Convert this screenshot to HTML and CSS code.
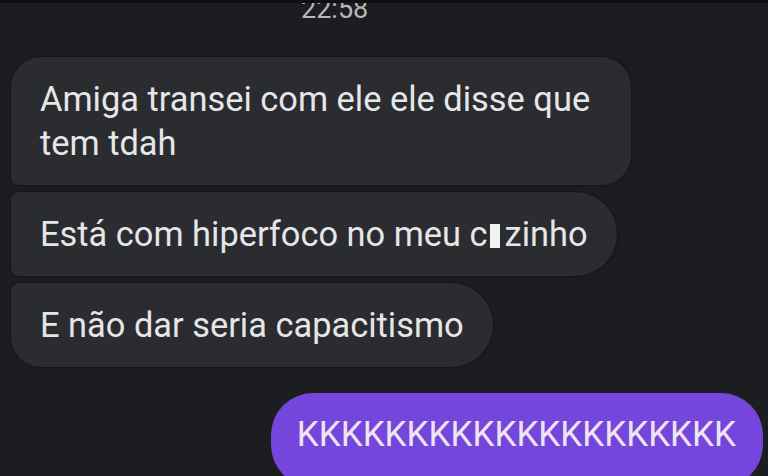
FILE: index.html
```html
<!DOCTYPE html>
<html lang="pt-BR">
<head>
<meta charset="utf-8">
<title>Conversa</title>
<link rel="stylesheet" href="styles.css">
</head>
<body>
<div class="chat">
  <div class="header">
    <span class="time">22:58</span>
  </div>
  <div class="group">
    <div class="bubble in first">Amiga transei com ele ele disse que tem tdah</div>
    <div class="bubble in middle">Está com hiperfoco no meu c<span class="censor"></span>zinho</div>
    <div class="bubble in last">E não dar seria capacitismo</div>
  </div>
  <div class="out-row">
    <div class="bubble out">KKKKKKKKKKKKKKKKKKKK</div>
  </div>
</div>
</body>
</html>
```

FILE: styles.css
```css
html, body {
  margin: 0;
  padding: 0;
  background: #1c1d21;
  overflow: hidden;
}

.chat {
  width: 768px;
  height: 476px;
  font-family: Roboto, "Liberation Sans", sans-serif;
  background: #1c1d21;
}

.header {
  position: relative;
  display: flow-root;
  height: 57px;
}

.header::before {
  content: "";
  position: absolute;
  left: 0;
  right: 0;
  top: 0;
  height: 3px;
  background: #101012;
  z-index: 1;
}

.time {
  display: block;
  margin-top: -4px;
  margin-left: 301px;
  font-size: 27px;
  line-height: 26px;
  color: #b7b7ba;
}

.group {
  display: flex;
  flex-direction: column;
  align-items: flex-start;
  gap: 7px;
  padding-left: 11px;
}

.bubble {
  font-size: 35px;
  line-height: 44px;
  padding: 20px 29px;
  box-sizing: border-box;
}

.in {
  font-size: 34.4px;
  background: #2b2c30;
  color: #e6e6e8;
  max-width: 620px;
  box-shadow: 0 0 3px rgba(0, 0, 0, 0.55);
}

.first {
  border-radius: 30px 30px 30px 8px;
}

.middle {
  border-radius: 8px 42px 42px 8px;
}

.last {
  border-radius: 8px 42px 42px 30px;
}

.censor {
  display: inline-block;
  width: 10px;
  height: 24px;
  background: #f2f2f2;
  margin: 0 5px 0 2px;
  vertical-align: -2px;
}

.out-row {
  display: flex;
  justify-content: flex-end;
  padding-right: 5px;
  margin-top: 26px;
}

.out {
  background: #7446dc;
  color: #efe4f4;
  border-radius: 42px;
  padding: 20px 27px 30px 26px;
}
```
